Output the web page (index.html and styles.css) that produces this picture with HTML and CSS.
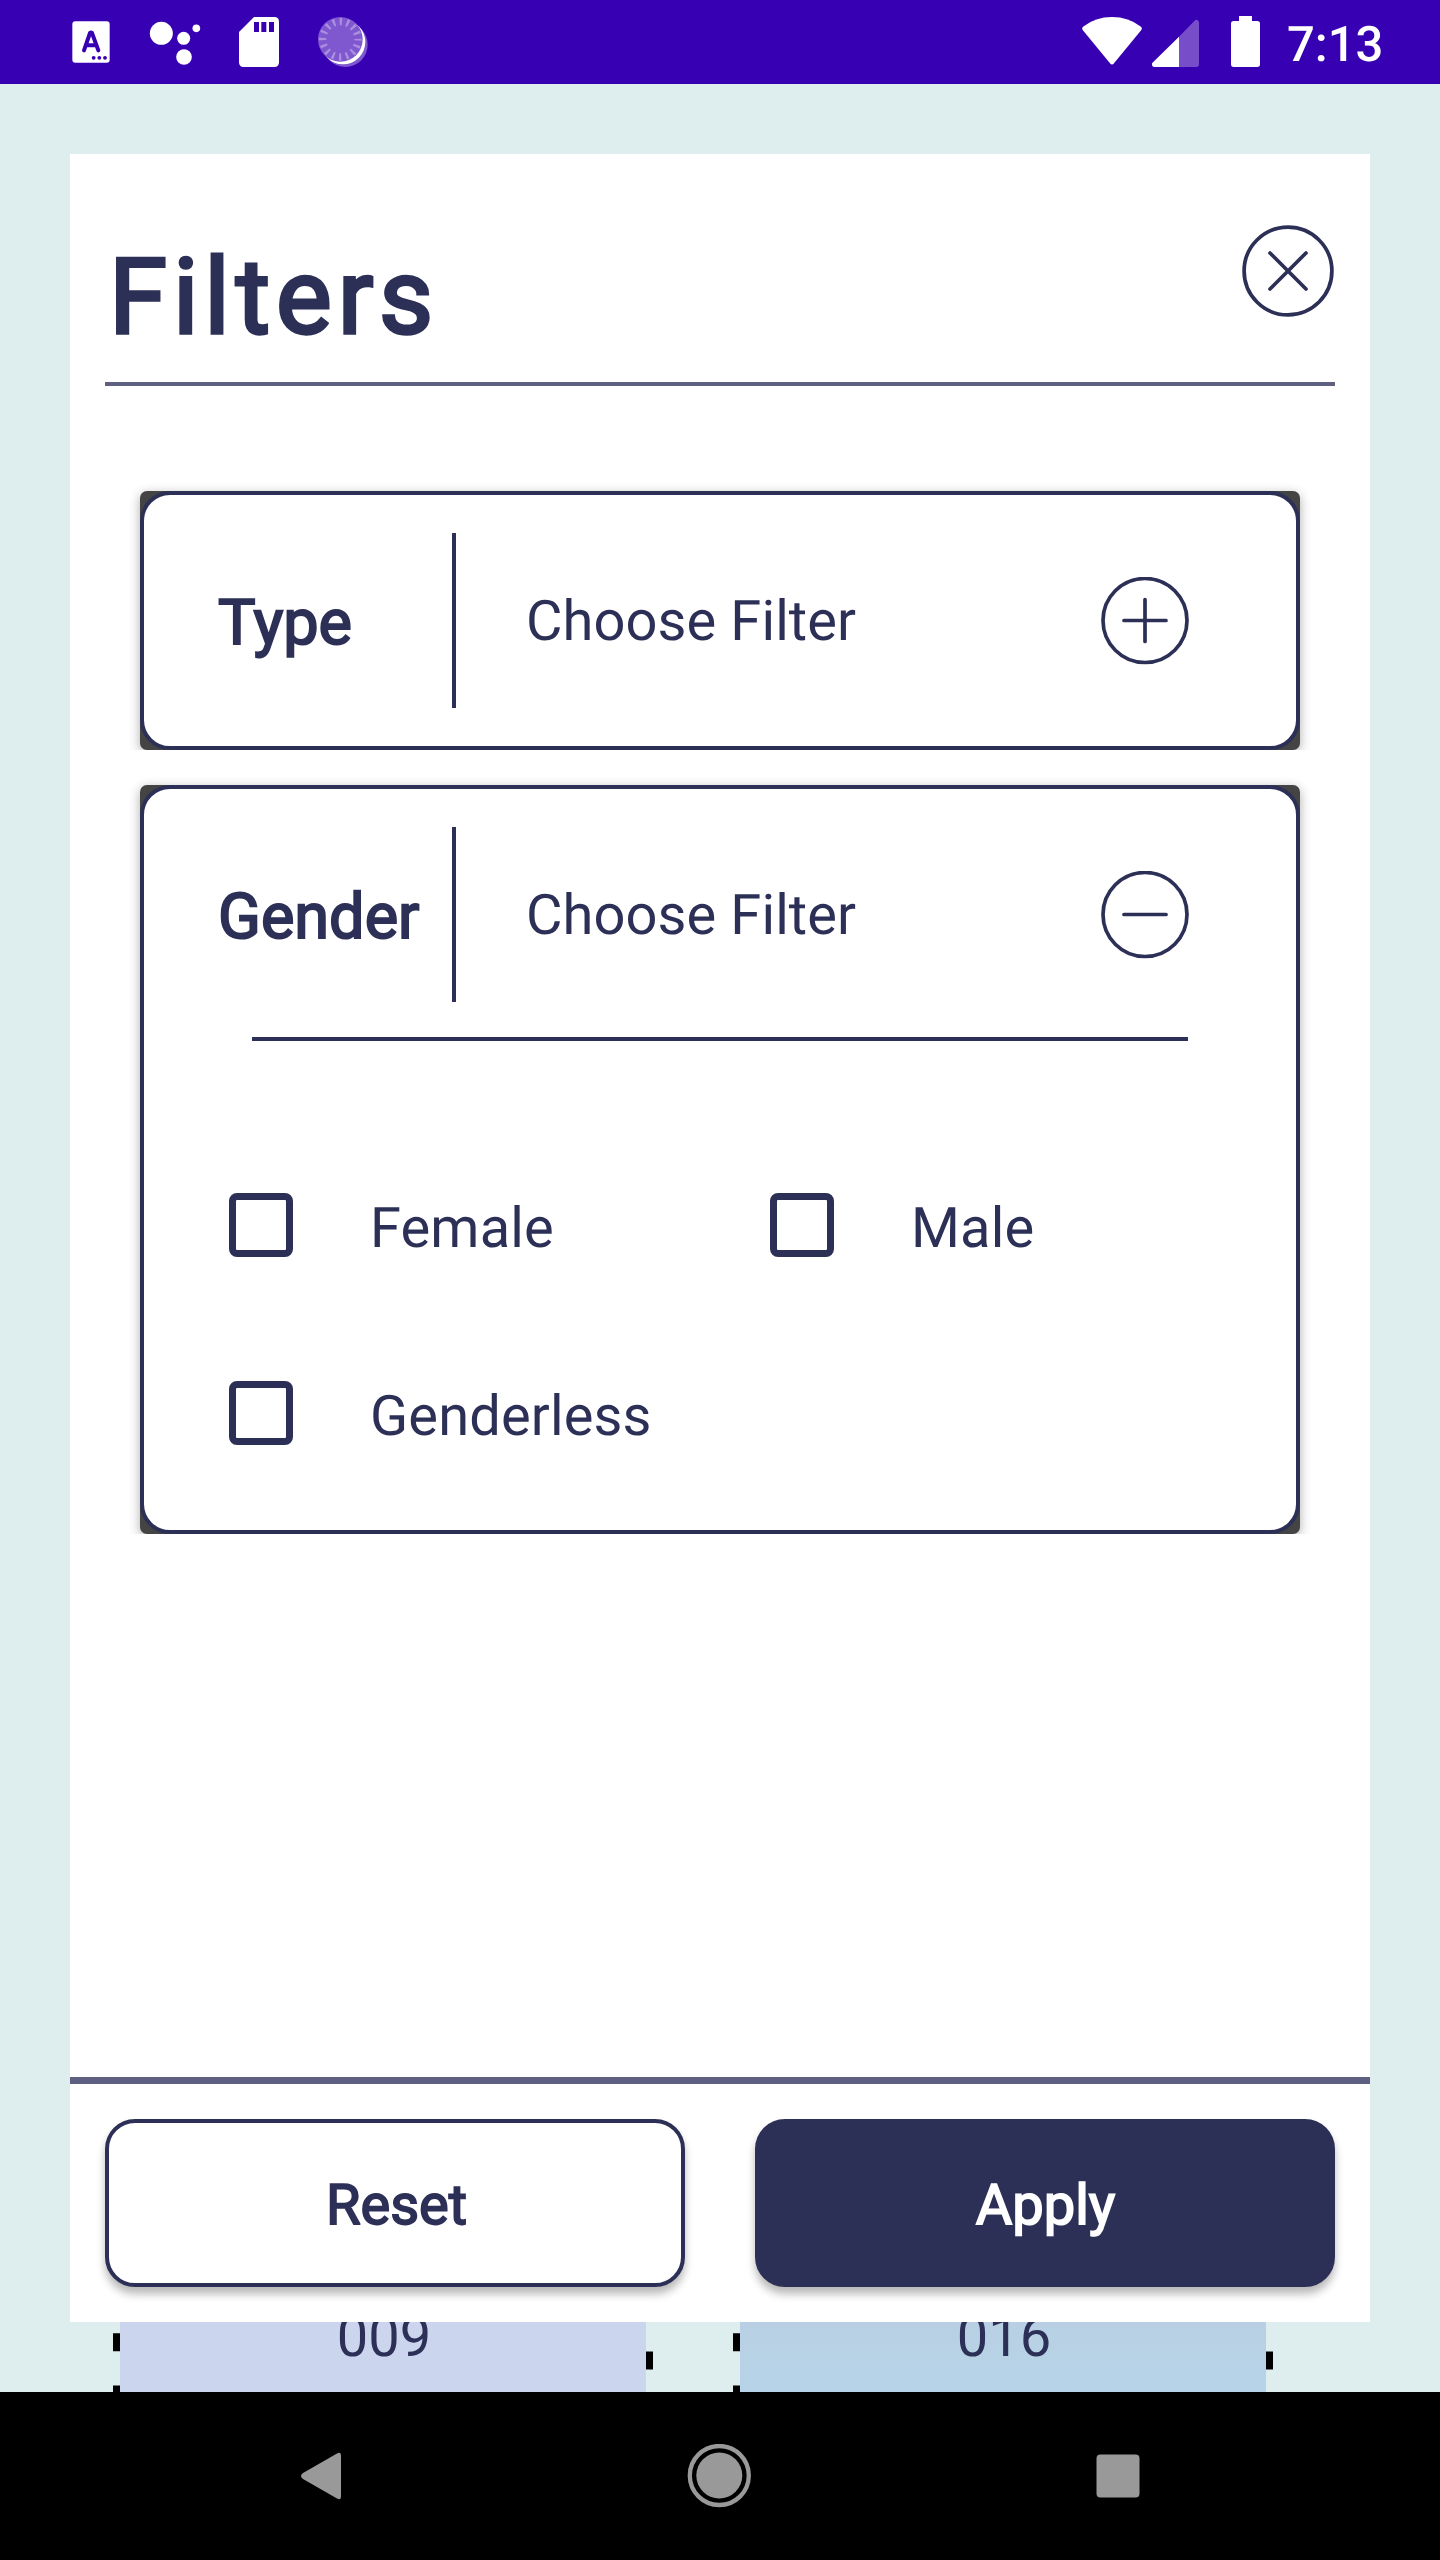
FILE: index.html
```html
<!DOCTYPE html>
<html lang="en">
<head>
<meta charset="utf-8">
<title>Filters</title>
<link rel="stylesheet" href="styles.css">
</head>
<body>
<header class="status-bar">
  <div class="notifications">
    <svg width="42" height="50" viewBox="60 51 126 150"><rect x="67" y="64" width="112" height="124" rx="9" fill="#fff"/><path d="M102 151L120 99Q123 96 126 99L145 151M109 136H138" fill="none" stroke="#3700b3" stroke-width="12" stroke-linecap="round" stroke-linejoin="round"/><g fill="#3700b3"><circle cx="131" cy="173.500" r="5.800"/><circle cx="148" cy="173.500" r="5.800"/><circle cx="165" cy="173.500" r="5.800"/></g></svg>
    <svg width="52" height="50" viewBox="297 51 156 150"><g fill="#fff"><circle cx="334" cy="100" r="34.500"/><circle cx="401" cy="115" r="19.500"/><circle cx="439" cy="85" r="11.500"/><circle cx="402" cy="171" r="23.500"/></g></svg>
    <svg width="42" height="50" viewBox="564 51 126 150"><path d="M612 51H673Q687 51 687 65V187Q687 201 673 201H581Q567 201 567 187V96Z" fill="#fff"/><path d="M612 66h15v30h-15zM634 66h15v30h-15zM657 66h15v30h-15z" fill="#3700b3"/></svg>
    <svg width="52" height="50" viewBox="801 51 156 150"><circle cx="886" cy="134" r="67" fill="#7f57cf"/><circle cx="879" cy="126" r="67" fill="#fff"/><circle cx="871" cy="118" r="67" fill="#7f57cf"/><circle cx="871" cy="118" r="53" fill="none" stroke="#aa8fdf" stroke-width="22" stroke-dasharray="7 13.810" stroke-dashoffset="3.500"/></svg>
  </div>
  <div class="system">
    <svg class="wifi" width="62" height="50" viewBox="63 51 186 150"><path d="M69 80Q106 51 156 51Q206 51 243 80Q248 84 244 90L162 190Q156 197 150 190L68 90Q64 84 69 80Z" fill="#fff"/></svg>
    <svg class="signal" width="49" height="50" viewBox="273 51 147 150"><path d="M357 110L403 63Q408 58 412 60Q417 62 417 69V193Q417 201 409 201H357Z" fill="#774dca"/><path d="M357 110V201H282Q276 200 276 194Q275 190 279 187Z" fill="#fff"/></svg>
    <svg class="battery" width="31" height="52" viewBox="510 48 93 156"><path d="M537 48H576V63H592Q600 63 600 71V193Q600 201 592 201H521Q513 201 513 193V71Q513 63 521 63H537Z" fill="#fff"/></svg>
    <span class="clock">7:13</span>
  </div>
</header>

<main class="screen">
  <section class="dialog">
    <header class="dialog-header">
      <h1 class="title">Filters</h1>
      <svg class="close" width="92" height="92" viewBox="0 0 92 92"><circle cx="46" cy="46" r="43.900"/><path d="M28 28L64 64M64 28L28 64"/></svg>
    </header>

    <div class="filters">
      <article class="card">
        <div class="card-body">
          <div class="card-row">
            <h2 class="label">Type</h2>
            <span class="divider"></span>
            <span class="hint">Choose Filter</span>
            <svg class="toggle" width="88" height="88" viewBox="0 0 88 88"><circle cx="44" cy="43.500" r="42"/><path d="M23 43.500H65M44 22.500V64.500"/></svg>
          </div>
        </div>
      </article>
      <article class="card card-open">
        <div class="card-body">
          <div class="card-row">
            <h2 class="label">Gender</h2>
            <span class="divider"></span>
            <span class="hint">Choose Filter</span>
            <svg class="toggle" width="88" height="88" viewBox="0 0 88 88"><circle cx="44" cy="43.500" r="42"/><path d="M23 43.500H65"/></svg>
          </div>
          <div class="rule"></div>
          <div class="options">
            <div class="option"><span class="box"></span><span class="option-text">Female</span></div>
            <div class="option"><span class="box"></span><span class="option-text">Male</span></div>
            <div class="option"><span class="box"></span><span class="option-text">Genderless</span></div>
          </div>
        </div>
      </article>
    </div>

    <footer class="actions">
      <div class="button reset">Reset</div>
      <div class="button apply">Apply</div>
    </footer>
  </section>

  <div class="list">
    <svg width="7" height="70" viewBox="0 0 7 70"><path d="M0 11.300h7v18H0zM0 63.500h7v7H0z"/></svg>
    <div class="tile lilac"><span>009</span></div>
    <svg width="7" height="70" viewBox="0 0 7 70"><path d="M0 29.500h7v18H0z"/></svg>
    <svg class="second" width="7" height="70" viewBox="0 0 7 70"><path d="M0 11.300h7v18H0zM0 63.500h7v7H0z"/></svg>
    <div class="tile blue"><span>016</span></div>
    <svg width="7" height="70" viewBox="0 0 7 70"><path d="M0 29.500h7v18H0z"/></svg>
  </div>
</main>

<nav class="nav-bar">
  <svg width="42" height="48" viewBox="0 0 42 48"><path d="M37 1.500Q41 -1 41 4V44Q41 49 37 46.500L3 27Q-1 24 3 21Z"/></svg>
  <svg width="64" height="64" viewBox="0 0 64 64"><circle cx="32.300" cy="31.500" r="29.500" fill="none" stroke="#999" stroke-width="4.300"/><circle cx="32.300" cy="31.500" r="23"/></svg>
  <svg width="44" height="44" viewBox="0 0 44 44"><rect x=".5" y=".5" width="43" height="43" rx="4"/></svg>
</nav>
</body>
</html>
```
FILE: styles.css
```css
* { box-sizing: border-box; }

body {
  margin: 0;
  width: 1440px;
  height: 2560px;
  overflow: hidden;
  display: flex;
  flex-direction: column;
  background: #deeded;
  color: #2d3056;
  font-family: Roboto, "Liberation Sans", sans-serif;
  text-rendering: geometricPrecision;
}

svg { display: block; flex: none; }
h1, h2 { margin: 0; font-weight: 400; }

/* Status bar */
.status-bar {
  height: 84px;
  flex: none;
  display: flex;
  justify-content: space-between;
  background: #3700b3;
  color: #fff;
}
.notifications { display: flex; gap: 37px; padding: 17px 0 0 70px; }
.system { display: flex; align-items: flex-start; padding-right: 56px; }
.wifi, .signal { margin-top: 17px; }
.signal { margin-left: 8px; }
.battery { margin: 16px 0 0 30px; }
.clock {
  width: 97px;
  margin-left: 26px;
  line-height: 84px;
  padding-top: 3px;
  font-size: 49px;
  font-weight: 500;
  white-space: nowrap;
}

/* Dialog */
.screen { height: 2308px; padding-top: 70px; }
.dialog {
  height: 2168px;
  margin: 0 70px;
  display: flex;
  flex-direction: column;
  background: #fff;
}
.dialog-header {
  height: 232px;
  margin: 0 35px;
  padding-left: 4px;
  display: flex;
  justify-content: space-between;
  align-items: flex-start;
  border-bottom: 4px solid #5f6081;
}
.title {
  margin-top: 84px;
  font-size: 105px;
  line-height: 120px;
  letter-spacing: 5.900px;
  -webkit-text-stroke: 3.280px #2d3056;
}
.close { margin-top: 71px; margin-right: 1.500px; }
.close, .toggle { fill: none; stroke: #2d3056; stroke-width: 3.700; stroke-linecap: round; }

.filters {
  flex: 1;
  display: flex;
  flex-direction: column;
  gap: 35px;
  padding: 105px 70px 0;
}
.card {
  height: 259px;
  background: #444;
  border-radius: 7px;
  box-shadow: 0 3px 12px rgba(0, 0, 0, .32);
  clip-path: inset(-20px -20px 0 -20px);
}
.card-open { height: 749px; }
.card-body {
  height: 100%;
  padding-top: 38px;
  background: #fff;
  border: 4px solid #2d3056;
  border-radius: 30px;
}
.card-row {
  height: 175px;
  display: flex;
  align-items: center;
  padding: 0 107.500px 0 74px;
}
.label {
  width: 234px;
  padding-top: 6px;
  font-size: 63px;
  line-height: 74px;
  -webkit-text-stroke: 1.970px #2d3056;
}
.divider { width: 4px; height: 175px; background: #2d3056; }
.hint { flex: 1; margin-left: 70px; font-size: 56px; line-height: 66px; letter-spacing: .1px; }
.rule { height: 4px; margin: 35px 108px 0; background: #2d3056; }

.options {
  display: grid;
  grid-template-columns: 541px 1fr;
  grid-auto-rows: 188px;
  padding: 90px 0 0 85px;
}
.option { display: flex; align-items: center; }
.box { width: 64px; height: 64px; border: 7.500px solid #2d3056; border-radius: 8px; }
.option-text { margin-left: 77px; padding-top: 5px; font-size: 56px; line-height: 66px; letter-spacing: .15px; }

.actions {
  height: 245px;
  display: grid;
  grid-template-columns: 580px 580px;
  gap: 70px;
  padding: 35px;
  border-top: 7px solid #5f6081;
}
.button {
  height: 168px;
  border: 4px solid #2d3056;
  border-radius: 30px;
  padding: 2px 0 0 1px;
  text-align: center;
  font-size: 56px;
  line-height: 160px;
  box-shadow: 0 7px 9px rgba(0, 0, 0, .28);
}
.reset { padding-left: 3px; background: #fff; -webkit-text-stroke: 1.750px #2d3056; }
.apply { background: #2d3056; color: #fff; -webkit-text-stroke: 1.750px #fff; }

/* Tiles showing below the dialog */
.list { height: 70px; display: flex; padding-left: 113px; overflow: hidden; }
.list .second { margin-left: 80px; }
.tile { width: 526px; height: 70px; padding-left: 2px; text-align: center; font-size: 56px; overflow: hidden; }
.tile span { display: block; margin-top: -18.500px; line-height: 66px; }
.lilac { background: #cbd5ee; }
.blue { background: linear-gradient(#b9d0e4, #b6d3e7); }

/* Navigation bar */
.nav-bar {
  height: 168px;
  flex: none;
  display: flex;
  align-items: center;
  justify-content: space-between;
  padding: 0 300px;
  background: #000;
  fill: #999;
}
```
